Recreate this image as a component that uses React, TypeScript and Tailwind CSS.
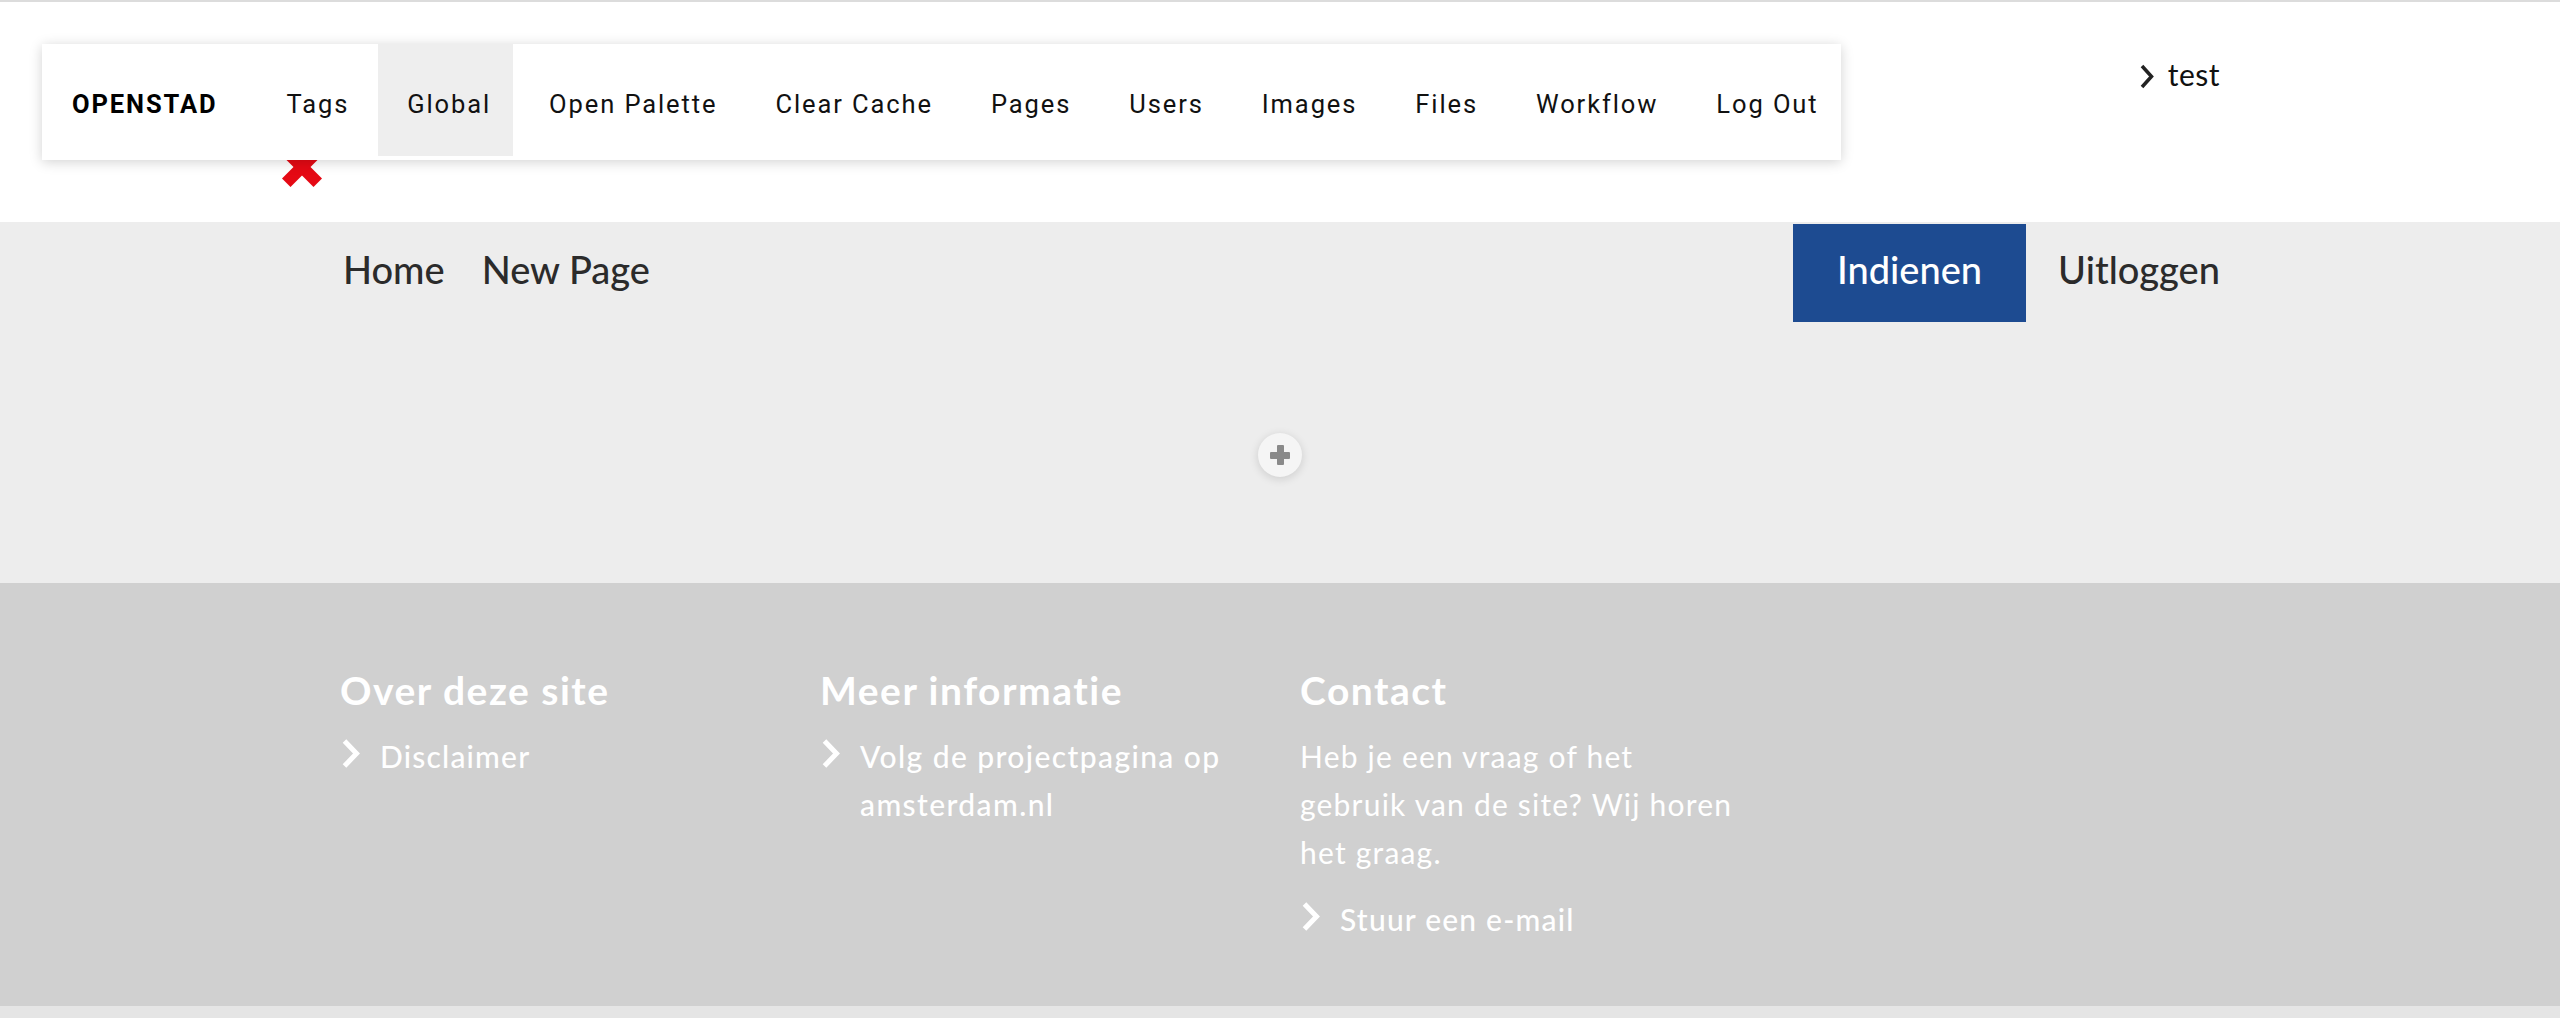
import React from "react";

const FooterChevron = () => (
  <svg viewBox="0 0 18 29" className="ml-[2px] mt-[7px] h-[29px] w-[18px] shrink-0" fill="none">
    <path d="M2.5 2 L14.5 14.5 L2.5 27" stroke="#ffffff" strokeWidth="5" strokeLinejoin="miter" />
  </svg>
);

const adminItems: { label: string; cls: string }[] = [
  { label: "Tags", cls: "flex h-[112px] items-center px-[29px] pt-[8px]" },
  { label: "Global", cls: "flex h-[112px] items-center bg-[#eeeeee] pl-[29px] pr-[22px] pt-[8px]" },
  { label: "Open Palette", cls: "flex h-[112px] items-center pl-[36px] pr-[29px] pt-[8px]" },
  { label: "Clear Cache", cls: "flex h-[112px] items-center px-[29px] pt-[8px]" },
  { label: "Pages", cls: "flex h-[112px] items-center px-[29px] pt-[8px]" },
  { label: "Users", cls: "flex h-[112px] items-center px-[29px] pt-[8px]" },
  { label: "Images", cls: "flex h-[112px] items-center px-[29px] pt-[8px]" },
  { label: "Files", cls: "flex h-[112px] items-center px-[29px] pt-[8px]" },
  { label: "Workflow", cls: "flex h-[112px] items-center px-[29px] pt-[8px]" },
  { label: "Log Out", cls: "flex h-[112px] items-center pl-[29px] pr-[22px] pt-[8px]" },
];

export default function App() {
  return (
    <div className="min-h-[1018px] w-full bg-white font-['Lato',sans-serif]">
      <div className="h-[2px] bg-[#dcdcdc]" />

      <header className="relative h-[220px] bg-white">
        <nav className="absolute left-[42px] top-[42px] z-10 flex h-[116px] items-start bg-white pb-[4px] font-['Roboto',sans-serif] text-[25.5px] tracking-[1.9px] text-[#111111] shadow-[0_2px_12px_rgba(0,0,0,0.18)]">
          <div className="flex h-[112px] items-center pl-[30px] pr-[40px] pt-[8px] font-bold text-black">OPENSTAD</div>
          {adminItems.map((item) => (
            <div key={item.label} className={item.cls}>
              {item.label}
            </div>
          ))}
        </nav>

        <div className="mx-auto flex w-[1880px] items-start justify-between">
          <svg viewBox="0 0 40 40" className="-ml-[58px] mt-[145px] h-[40px] w-[40px]">
            <line x1="4.24" y1="4.24" x2="35.76" y2="35.76" stroke="#e50914" strokeWidth="12" />
            <line x1="35.76" y1="4.24" x2="4.24" y2="35.76" stroke="#e50914" strokeWidth="12" />
          </svg>
          <div className="mt-[50px] flex items-center text-[30px] text-[#111111]">
            <svg viewBox="0 0 14 25" className="h-[25px] w-[14px]" fill="none">
              <path d="M2 2 L11.5 12.5 L2 23" stroke="#222222" strokeWidth="3.5" />
            </svg>
            <span className="ml-[14px] pb-[4px] tracking-[0.5px]">test</span>
          </div>
        </div>
      </header>

      <section className="bg-[#ededed]">
        <div className="mx-auto flex h-[102px] w-[1880px] items-center justify-between text-[38px] font-medium text-[#2b2b2b]">
          <div className="ml-[3px] flex items-center gap-[37px]">
            <a className="pb-[8px]">Home</a>
            <a className="pb-[8px]">New Page</a>
          </div>
          <div className="flex items-center">
            <a className="flex h-[98px] items-center bg-[#1d4b91] px-[44px] pb-[8px] text-white">Indienen</a>
            <a className="ml-[32px] pb-[8px]">Uitloggen</a>
          </div>
        </div>
        <div className="flex h-[259px] items-center justify-center pt-[3px]">
          <button className="relative flex h-[44px] w-[44px] items-center justify-center rounded-full bg-[#f5f5f5] shadow-[0_2px_10px_rgba(0,0,0,0.14)]">
            <span className="absolute h-[7px] w-[20px] rounded-[1px] bg-[#8a8a8a]" />
            <span className="absolute h-[20px] w-[7px] rounded-[1px] bg-[#8a8a8a]" />
          </button>
        </div>
      </section>

      <footer className="h-[423px] bg-[#d0d0d0] text-white">
        <div className="mx-auto grid w-[1880px] grid-cols-[480px_480px_480px] pt-[83px]">
          <div>
            <h2 className="text-[39px] font-bold leading-[48px] tracking-[1.5px]">Over deze site</h2>
            <a className="mt-[18px] flex items-start text-[30px] font-medium leading-[48px] tracking-[1.2px]">
              <FooterChevron />
              <span className="ml-[20px]">Disclaimer</span>
            </a>
          </div>
          <div>
            <h2 className="text-[39px] font-bold leading-[48px] tracking-[1.5px]">Meer informatie</h2>
            <a className="mt-[18px] flex items-start text-[30px] font-medium leading-[48px] tracking-[1.4px]">
              <FooterChevron />
              <span className="ml-[20px]">
                Volg de projectpagina op
                <br />
                amsterdam.nl
              </span>
            </a>
          </div>
          <div>
            <h2 className="text-[39px] font-bold leading-[48px] tracking-[1.5px]">Contact</h2>
            <p className="mt-[18px] text-[30px] leading-[48px] tracking-[1.2px]">
              Heb je een vraag of het
              <br />
              gebruik van de site? Wij horen
              <br />
              het graag.
            </p>
            <a className="mt-[19px] flex items-start text-[30px] font-medium leading-[48px] tracking-[1.2px]">
              <FooterChevron />
              <span className="ml-[20px]">Stuur een e-mail</span>
            </a>
          </div>
        </div>
      </footer>
      <div className="h-[12px] bg-[#e5e5e5]" />
    </div>
  );
}
